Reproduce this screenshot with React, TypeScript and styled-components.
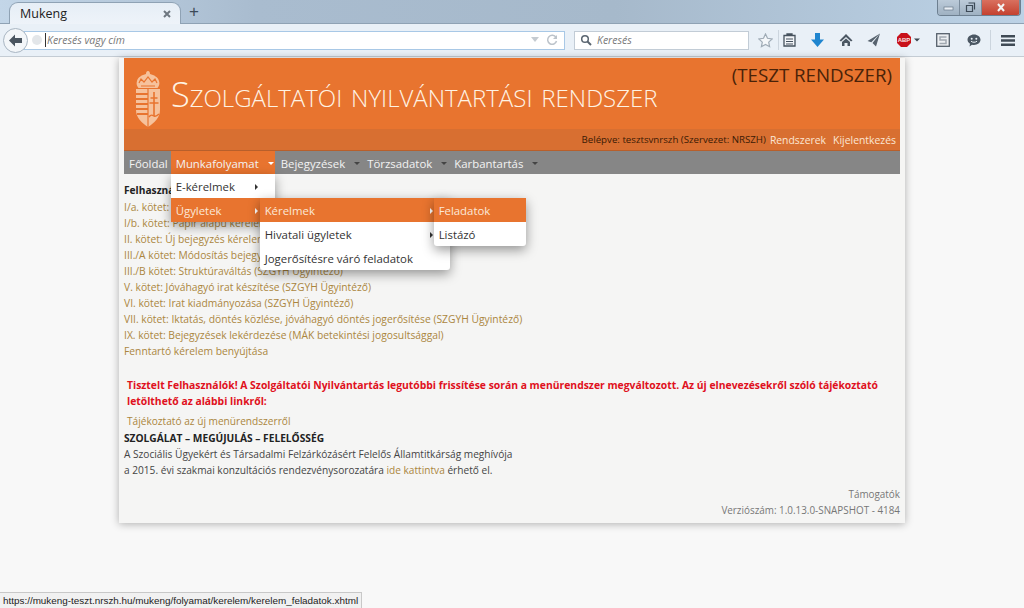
import React from "react";
import styled, { createGlobalStyle } from "styled-components";

const Global = createGlobalStyle`
  html, body { margin: 0; padding: 0; height: 100%; background: #f8f8f8; }
  body { font-family: "Open Sans", "Liberation Sans", sans-serif; overflow: hidden; }
  #root { height: 608px; }
`;

const Shell = styled.div`
  position: relative;
  width: 1024px;
  height: 608px;
  overflow: hidden;
  display: flex;
  flex-direction: column;
`;

/* browser chrome */
const TabStrip = styled.div`
  height: 24px;
  flex: none;
  display: flex;
  align-items: flex-end;
  padding-left: 9px;
  background: linear-gradient(90deg, #c3d6e8 0%, #a9bccf 25%, #a6b9cb 60%, #bcd2e6 100%);
  border-bottom: 1px solid #8fa2b4;
  box-sizing: border-box;
  position: relative;
`;

const Tab = styled.div`
  width: 172px;
  height: 22px;
  margin-bottom: -1px;
  box-sizing: border-box;
  padding: 0 8px 0 10px;
  display: flex;
  align-items: center;
  justify-content: space-between;
  background: linear-gradient(#e6eef6, #eef3f9);
  border-radius: 9px 9px 0 0;
  border: 1px solid #8fa2b4;
  border-bottom: none;
  font: 12.5px "Open Sans", sans-serif;
  color: #222;
`;

const NewTab = styled.div`
  width: 26px;
  text-align: center;
  font: 400 17px/22px "Liberation Sans", sans-serif;
  color: #3c4a58;
`;

const WindowButtons = styled.div`
  position: absolute;
  top: 0;
  right: 3px;
  width: 82px;
  height: 15px;
  display: flex;
  border: 1px solid #6d7f90;
  border-top: none;
  border-radius: 0 0 4px 4px;
  overflow: hidden;
`;

const WindowButton = styled.div<{ $close?: boolean }>`
  flex: ${(p) => (p.$close ? "0 0 37px" : "1")};
  display: flex;
  align-items: center;
  justify-content: center;
  background: ${(p) => (p.$close ? "linear-gradient(#d9705f, #c4412f)" : "linear-gradient(#bccbd9, #9fb1c2)")};
  border-right: 1px solid #7b8c9c;
`;

const NavBar = styled.div`
  height: 33px;
  flex: none;
  box-sizing: border-box;
  background: #e9f0f7;
  border-bottom: 1px solid #c4ccd4;
  display: flex;
  align-items: center;
  padding-left: 3px;
`;

const BackButton = styled.div`
  width: 25px;
  height: 25px;
  flex: none;
  box-sizing: border-box;
  border-radius: 50%;
  background: #f3f6f9;
  border: 1px solid #a9b6c3;
  display: flex;
  align-items: center;
  justify-content: center;
  margin-right: -4px;
  position: relative;
  z-index: 1;
`;

const UrlBox = styled.div`
  width: 541px;
  height: 19px;
  flex: none;
  box-sizing: border-box;
  background: #fff;
  border: 1px solid #a8c8e6;
  display: flex;
  align-items: center;
  padding: 0 6px 0 6px;
  gap: 2px;
`;

const Hint = styled.span`
  font: italic 10.5px "Open Sans", sans-serif;
  color: #777;
  flex: 1;
  border-left: 1px solid #333;
  padding-left: 1px;
`;

const ReloadIcon = styled.svg`
  margin-left: 4px;
`;

const SearchBox = styled.div`
  width: 175px;
  height: 19px;
  flex: none;
  margin-left: 9px;
  box-sizing: border-box;
  background: #fff;
  border: 1px solid #c2ccd6;
  display: flex;
  align-items: center;
  padding-left: 5px;
  gap: 5px;
  font: italic 10.5px "Open Sans", sans-serif;
  color: #777;
`;

const Tools = styled.div`
  display: flex;
  align-items: center;
  margin-left: 3px;
`;

const ToolSlot = styled.div<{ $w: number; $line?: boolean }>`
  width: ${(p) => p.$w}px;
  height: 20px;
  flex: none;
  display: flex;
  align-items: center;
  justify-content: center;
  border-left: ${(p) => (p.$line ? "1px solid #ccd5de" : "none")};
  box-sizing: border-box;
`;

/* page */
const Viewport = styled.div`
  flex: 1;
  min-height: 0;
  background: #f8f8f8;
  display: flex;
  justify-content: center;
  padding: 1px 0 0;
`;

const Card = styled.main`
  position: relative;
  width: 786px;
  height: 465px;
  box-sizing: border-box;
  padding: 0 5px;
  background: #f5f5f4;
  box-shadow: 0 1px 8px rgba(0, 0, 0, 0.3);
`;

const Banner = styled.header`
  height: 71px;
  background: #e8742f;
  display: flex;
  padding-left: 11px;
  position: relative;
`;

const Crest = styled.svg`
  width: 26px;
  height: 56px;
  margin-top: 13px;
  flex: none;
`;

const Title = styled.h1`
  margin: 12px 0 0 10px;
  font: 300 34.3px/48px "Open Sans", sans-serif;
  font-variant: small-caps;
  color: #fff3e4;
  white-space: nowrap;
`;

const TestLabel = styled.div`
  position: absolute;
  top: 4px;
  right: 8px;
  font: 400 18.7px/25px "Open Sans", sans-serif;
  color: #4a2208;
`;

const UserStrip = styled.div`
  height: 22px;
  box-sizing: border-box;
  background: #d86f31;
  border-bottom: 1px solid #b85f2b;
  display: flex;
  justify-content: flex-end;
  align-items: center;
  padding-right: 4px;
  gap: 7px;
  font-size: 10.4px;
  color: #3a1a05;
`;

const UserName = styled.span`
  font-size: 9.7px;
  margin-right: -3px;
`;

const StripLink = styled.a`
  color: #fbe6d4;
`;

const MenuBar = styled.nav`
  height: 23px;
  background: #868686;
  display: flex;
  align-items: stretch;
  font-size: 11.4px;
  color: #f3f3f3;
`;

const MenuItem = styled.div<{ $active?: boolean; $plain?: boolean }>`
  position: relative;
  display: flex;
  align-items: center;
  gap: 9px;
  padding: 1px ${(p) => (p.$plain ? 3 : 1)}px 0 ${(p) => (p.$active || p.$plain ? 5 : 6)}px;
  background: ${(p) => (p.$active ? "#e8742f" : "transparent")};
`;

const DownCaret = styled.i<{ $dark?: boolean }>`
  width: 0;
  height: 0;
  border: 3px solid transparent;
  border-bottom: none;
  border-top: 3px solid ${(p) => (p.$dark ? "#444" : "#fff")};
`;

const Dropdown = styled.div<{ $top: number; $left: number; $width: number }>`
  position: absolute;
  top: ${(p) => p.$top}px;
  left: ${(p) => p.$left}px;
  width: ${(p) => p.$width}px;
  background: #fff;
  box-shadow: 0 4px 12px rgba(0, 0, 0, 0.4);
  border-radius: 0 0 3px 3px;
  z-index: 5;
  display: flex;
  flex-direction: column;
`;

const DropItem = styled.div<{ $active?: boolean }>`
  height: 24px;
  display: flex;
  align-items: center;
  justify-content: space-between;
  padding: 1px 18px 0 5px;
  box-sizing: border-box;
  font-size: 11.4px;
  white-space: nowrap;
  color: ${(p) => (p.$active ? "#fbe8d8" : "#333")};
  background: ${(p) => (p.$active ? "#e8742f" : "transparent")};
`;

const RightCaret = styled.i<{ $light?: boolean }>`
  width: 0;
  height: 0;
  border: 3px solid transparent;
  border-right: none;
  border-left: 3px solid ${(p) => (p.$light ? "#fff" : "#333")};
  margin-right: -1px;
`;

const Content = styled.section`
  padding-top: 8px;
  font-size: 10.3px;
  line-height: 16px;
  color: #444;
`;

const Strong = styled.div`
  font-weight: 700;
  font-size: 10.2px;
  color: #222;
`;

const LinkList = styled.div`
  margin-top: 1px;
`;

const LinkRow = styled.div`
  color: #ab8640;
  white-space: nowrap;
`;

const Notice = styled.div`
  margin: 18px 0 0 3px;
  font-weight: 700;
  color: #e01020;
  font-size: 10.37px;
`;

const PlainLink = styled.div`
  margin: 4px 0 0 3px;
  font-size: 10.15px;
  color: #ab8640;
`;

const Invite = styled.div`
  margin-top: 1px;
  font-size: 10.15px;
  white-space: nowrap;
`;

const Inline = styled.span`
  color: #ab8640;
`;

const Footer = styled.footer`
  margin-top: 8px;
  text-align: right;
  font-size: 9.9px;
  color: #777;
`;

const StatusBar = styled.div`
  position: absolute;
  left: 0;
  bottom: 0;
  height: 15px;
  padding: 0 3px;
  background: #f1f1f1;
  border: 1px solid #c8c8c8;
  border-left: none;
  border-bottom: none;
  font: 9.9px/15px "Liberation Sans", sans-serif;
  color: #222;
  white-space: nowrap;
`;

const links = [
  "I/a. kötet: E-kérelem benyújtása",
  "I/b. kötet: Papír alapú kérelem rögzítése",
  "II. kötet: Új bejegyzés kérelem feldolgozása",
  "III./A kötet: Módosítás bejegyzése",
  "III./B kötet: Struktúraváltás (SZGYH Ügyintéző)",
  "V. kötet: Jóváhagyó irat készítése (SZGYH Ügyintéző)",
  "VI. kötet: Irat kiadmányozása (SZGYH Ügyintéző)",
  "VII. kötet: Iktatás, döntés közlése, jóváhagyó döntés jogerősítése (SZGYH Ügyintéző)",
  "IX. kötet: Bejegyzések lekérdezése (MÁK betekintési jogosultsággal)",
  "Fenntartó kérelem benyújtása",
];

export default function App() {
  return (
    <Shell>
      <Global />
      <TabStrip>
        <Tab>
          Mukeng
          <svg width="10" height="10" viewBox="0 0 10 10">
            <path d="M2 2l6 6M8 2l-6 6" stroke="#6e7780" strokeWidth="2" />
          </svg>
        </Tab>
        <NewTab>+</NewTab>
        <WindowButtons>
          <WindowButton>
            <svg width="12" height="6" viewBox="0 0 12 6">
              <rect x="1" y="2" width="9" height="3" fill="#e8eef4" stroke="#6a7a89" strokeWidth="0.7" />
            </svg>
          </WindowButton>
          <WindowButton>
            <svg width="11" height="11" viewBox="0 0 11 11">
              <path d="M3.5 1h6v6.500M1.500 3.500h6v6h-6z" fill="none" stroke="#3d4a57" strokeWidth="1.200" />
            </svg>
          </WindowButton>
          <WindowButton $close>
            <svg width="10" height="9" viewBox="0 0 10 9">
              <path d="M2 1l6 7M8 1l-6 7" stroke="#f4f4f4" strokeWidth="2" />
            </svg>
          </WindowButton>
        </WindowButtons>
      </TabStrip>
      <NavBar>
        <BackButton>
          <svg width="15" height="13" viewBox="0 0 15 13">
            <path d="M7 0.500L1 6.500l6 6V9h7V4H7z" fill="#4a5560" />
          </svg>
        </BackButton>
        <UrlBox>
          <svg width="12" height="12" viewBox="0 0 12 12">
            <circle cx="6" cy="6" r="5" fill="#e3e6e9" />
          </svg>
          <Hint>Keresés vagy cím</Hint>
          <svg width="10" height="8" viewBox="0 0 10 8">
            <path d="M1 1h8L5 6z" fill="#c5cbd1" />
          </svg>
          <ReloadIcon width="12" height="12" viewBox="0 0 12 12">
            <path d="M10 3.500A4.500 4.500 0 1 0 10.500 7" fill="none" stroke="#bcc3ca" strokeWidth="1.500" />
            <path d="M11 1v4H7z" fill="#bcc3ca" />
          </ReloadIcon>
        </UrlBox>
        <SearchBox>
          <svg width="12" height="12" viewBox="0 0 12 12">
            <circle cx="5" cy="5" r="3.300" fill="none" stroke="#5a6570" strokeWidth="1.500" />
            <path d="M7.500 7.500L11 11" stroke="#5a6570" strokeWidth="2" />
          </svg>
          Keresés
        </SearchBox>
        <Tools>
          <ToolSlot $w={26}>
            <svg width="15" height="15" viewBox="0 0 15 15">
              <path d="M7.500 1l2 4.300 4.700.6-3.500 3.200.9 4.600-4.100-2.300-4.100 2.300.9-4.600L.8 5.900l4.700-.6z" fill="#f4f7fa" stroke="#9fabb6" strokeWidth="1.200" />
            </svg>
          </ToolSlot>
          <ToolSlot $w={22} $line>
            <svg width="13" height="14" viewBox="0 0 13 14">
              <path d="M4 2h5V1H4zM1 2.500h11V13H1z" fill="#f2f5f8" stroke="#46525e" strokeWidth="1.300" />
              <path d="M3 6h7M3 8.500h7M3 11h7" stroke="#46525e" strokeWidth="1.200" />
            </svg>
          </ToolSlot>
          <ToolSlot $w={34}>
            <svg width="13" height="14" viewBox="0 0 13 14">
              <path d="M4 0h5v6.500h4L6.500 14 0 6.500h4z" fill="#1f85cf" />
            </svg>
          </ToolSlot>
          <ToolSlot $w={24}>
            <svg width="14" height="14" viewBox="0 0 14 14">
              <path d="M7 1L0.500 7.500 2 8.500 7 4l5 4.500 1.500-1zM3 9l4-3.500L11 9v4H8.500V10h-3v3H3z" fill="#4b5763" />
            </svg>
          </ToolSlot>
          <ToolSlot $w={32}>
            <svg width="14" height="14" viewBox="0 0 14 14">
              <path d="M13 0.500L0.500 8l3.800 1.300L13 0.500 5.500 10 9 13.500z" fill="#57636f" />
            </svg>
          </ToolSlot>
          <ToolSlot $w={38}>
            <svg width="24" height="14" viewBox="0 0 24 14">
              <path d="M4 0h6l4 4v6l-4 4H4L0 10V4z" fill="#c8111a" />
              <text x="7" y="9" textAnchor="middle" fontSize="6" fontWeight="700" fontFamily="Liberation Sans, sans-serif" fill="#f7e4e4">ABP</text>
              <path d="M17 5.500h6l-3 3z" fill="#3c4650" />
            </svg>
          </ToolSlot>
          <ToolSlot $w={30}>
            <svg width="14" height="14" viewBox="0 0 14 14">
              <rect x="0.700" y="0.700" width="12.600" height="12.600" fill="#eceff2" stroke="#56606b" strokeWidth="1.300" />
              <path d="M10.500 4H4v3h6v3.500H3.500" fill="none" stroke="#a0a8b0" strokeWidth="1.500" />
            </svg>
          </ToolSlot>
          <ToolSlot $w={32}>
            <svg width="14" height="13" viewBox="0 0 14 13">
              <path d="M7 0.500c3.600 0 6.500 2.300 6.500 5.300S10.600 11 7 11c-.7 0-1.300-.1-2-.2L2.500 12.500l.5-2.800C1.400 8.800.500 7.300.500 5.800.500 2.800 3.400.5 7 .5z" fill="#4b5763" />
              <circle cx="4.700" cy="4.700" r="1" fill="#e9f0f7" />
              <circle cx="9.300" cy="4.700" r="1" fill="#e9f0f7" />
              <path d="M4 7.200c1.500 1.400 4.500 1.400 6 0" fill="none" stroke="#e9f0f7" strokeWidth="1" />
            </svg>
          </ToolSlot>
          <ToolSlot $w={34} $line>
            <svg width="14" height="11" viewBox="0 0 14 11">
              <path d="M0 0h14v2.400H0zM0 4.300h14v2.400H0zM0 8.600h14V11H0z" fill="#3f4a55" />
            </svg>
          </ToolSlot>
        </Tools>
      </NavBar>
      <Viewport>
        <Card>
          <Banner>
            <Crest viewBox="0 0 26 56">
              {/* crown */}
              <path d="M13 0c1.500 0 2 1.500 2 3 4 1 8 3 9 7 1 3 0 5-1.500 7H3.500C2 15 1 13 2 10c1-4 5-6 9-7 0-1.500.5-3 2-3z" fill="#f6c29c" />
              <path d="M4 12l2-4 3 3 4-5 4 5 3-3 2 4M6 15h14" fill="none" stroke="#e8742f" strokeWidth="1.200" />
              {/* shield */}
              <path d="M1 18h24v21c0 8-6 13-12 17C7 52 1 47 1 39z" fill="#f6c29c" />
              <path d="M13 18v38" stroke="#e8742f" strokeWidth="1.200" />
              <path d="M1 23h12M1 28h12M1 33h12M1 38h12M2 43h11" stroke="#e8742f" strokeWidth="1.800" />
              <path d="M19 21v24M15.500 27h7M14.500 32h9" stroke="#e8742f" strokeWidth="1.600" fill="none" />
              <path d="M14 46c2-3 3-2 5-1s3 0 5-2" stroke="#e8742f" strokeWidth="1.500" fill="none" />
            </Crest>
            <Title>Szolgáltatói nyilvántartási rendszer</Title>
            <TestLabel>(TESZT RENDSZER)</TestLabel>
          </Banner>
          <UserStrip>
            <UserName>Belépve: tesztsvnrszh (Szervezet: NRSZH)</UserName>
            <StripLink>Rendszerek</StripLink>
            <StripLink>Kijelentkezés</StripLink>
          </UserStrip>
          <MenuBar>
            <MenuItem $plain>Főoldal</MenuItem>
            <MenuItem $active>
              Munkafolyamat <DownCaret />
              <Dropdown $top={23} $left={0} $width={104}>
                <DropItem>
                  E-kérelmek <RightCaret />
                </DropItem>
                <DropItem $active>
                  Ügyletek <RightCaret $light />
                  <Dropdown $top={24} $left={89} $width={190}>
                    <DropItem $active>
                      Kérelmek <RightCaret $light />
                      <Dropdown $top={0} $left={174} $width={92}>
                        <DropItem $active>Feladatok</DropItem>
                        <DropItem>Listázó</DropItem>
                      </Dropdown>
                    </DropItem>
                    <DropItem>
                      Hivatali ügyletek <RightCaret />
                    </DropItem>
                    <DropItem>Jogerősítésre váró feladatok</DropItem>
                  </Dropdown>
                </DropItem>
              </Dropdown>
            </MenuItem>
            <MenuItem>
              Bejegyzések <DownCaret $dark />
            </MenuItem>
            <MenuItem>
              Törzsadatok <DownCaret $dark />
            </MenuItem>
            <MenuItem>
              Karbantartás <DownCaret $dark />
            </MenuItem>
          </MenuBar>
          <Content>
            <Strong>Felhasználói kézikönyvek</Strong>
            <LinkList>
              {links.map((l) => (
                <LinkRow key={l}>{l}</LinkRow>
              ))}
            </LinkList>
            <Notice>
              Tisztelt Felhasználók! A Szolgáltatói Nyilvántartás legutóbbi frissítése során a menürendszer megváltozott. Az új elnevezésekről szóló tájékoztató letölthető az alábbi linkről:
            </Notice>
            <PlainLink>Tájékoztató az új menürendszerről</PlainLink>
            <Invite>
              <Strong>SZOLGÁLAT – MEGÚJULÁS – FELELŐSSÉG</Strong>
              A Szociális Ügyekért és Társadalmi Felzárkózásért Felelős Államtitkárság meghívója
              <br />a 2015. évi szakmai konzultációs rendezvénysorozatára <Inline>ide kattintva</Inline> érhető el.
            </Invite>
            <Footer>
              Támogatók
              <br />
              Verziószám: 1.0.13.0-SNAPSHOT - 4184
            </Footer>
          </Content>
        </Card>
      </Viewport>
      <StatusBar>https://mukeng-teszt.nrszh.hu/mukeng/folyamat/kerelem/kerelem_feladatok.xhtml</StatusBar>
    </Shell>
  );
}
